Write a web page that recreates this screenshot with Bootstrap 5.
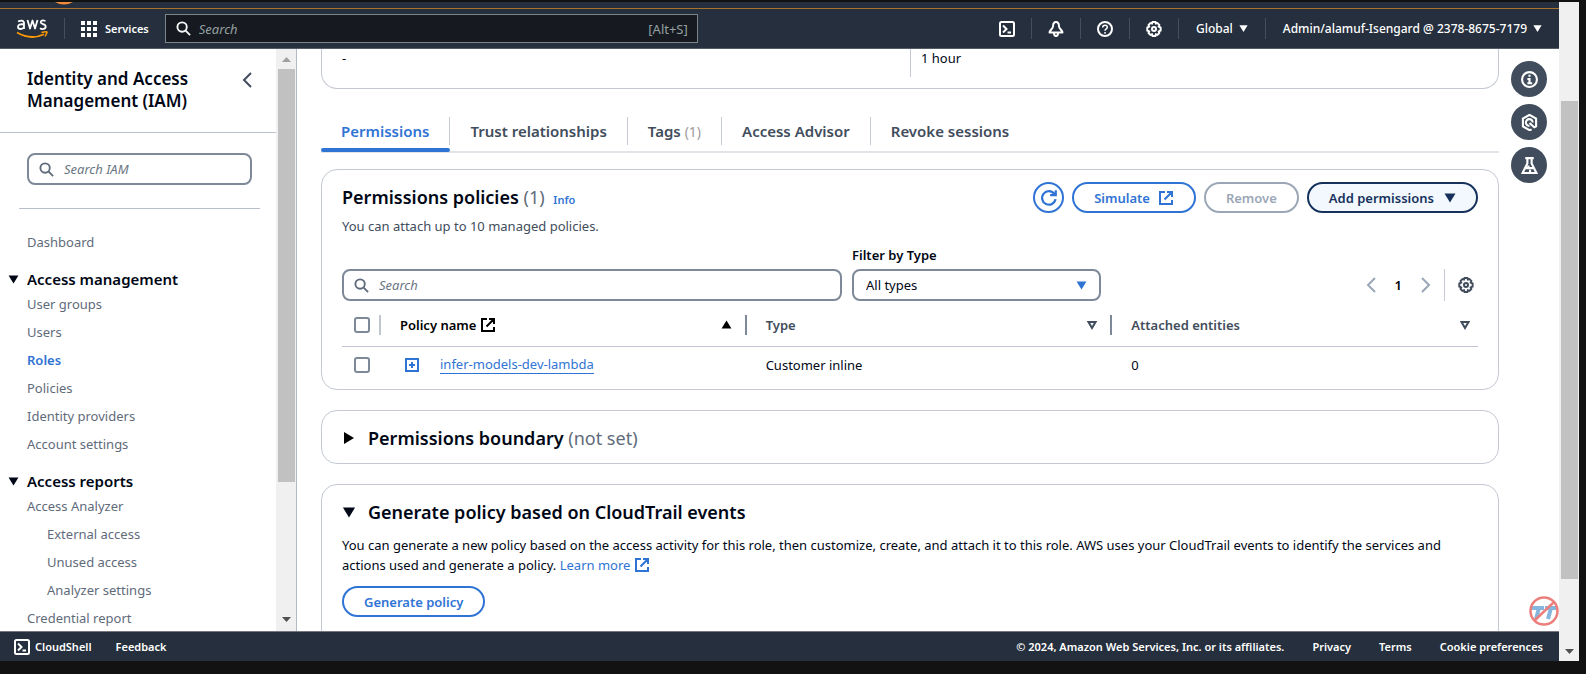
<!DOCTYPE html>
<html lang="en">
<head>
<meta charset="utf-8">
<meta name="viewport" content="width=device-width, initial-scale=1">
<title>Roles | IAM | Global</title>
<link href="https://cdn.jsdelivr.net/npm/bootstrap@5.3.0/dist/css/bootstrap.min.css" rel="stylesheet">
<style>
:root{--navy:#252f3d;--ink:#000716;--body:#414d5c;--muted:#5f6b7a;--line:#c6c6d2;--field:#7d8998;--link:#2f74d4}
body{font-family:"Noto Sans","Open Sans",sans-serif;font-size:13px;line-height:20px;color:var(--ink);background:#121212}
svg{display:block;flex:none}
a{text-decoration:none;color:inherit}
.ic{fill:none;stroke:currentColor;stroke-width:2}
.screen{height:100vh;padding:2px 7px 13px 0}
.app{min-width:0}
.strip{height:7px;background:var(--navy);border-bottom:1px solid #a8742c}
.strip svg{margin-left:55px}
.topbar{height:40px;background:var(--navy);border-bottom:1px solid #545b64;color:#fff;font-size:12px;font-weight:500}
.topbar .rule{width:1px;height:21px;background:#454f5c;flex:none}
.topbar button,.footbar button{background:none;border:0;padding:0;color:inherit;font-weight:inherit;display:flex;align-items:center}
.topbar .services{font-size:11px;font-weight:600}
.topbar .tool{width:48px;justify-content:center}
.topbar .choice{padding:0 17px;gap:6px}
.finder{width:533px;height:29px;background:#161a20;border:1px solid #7c848b;color:#95a0a0;font-weight:400;font-size:13px;padding:0 9px 0 10px}
.finder input{background:none;border:0;outline:0;padding:0;color:#fff}
input::placeholder{font-style:italic;color:#6b7683;opacity:1}
.finder input::placeholder{color:#95a0a0}
.side{width:276px}
.sidehead{padding:19px 24px 20px 27px;border-bottom:1px solid #bcc2cd}
.sidehead h2{font-size:17px;line-height:22px;font-weight:600;margin:0}
.field{height:32px;border:2px solid var(--field);border-radius:8px;background:#fff;padding:0 10px;gap:10px}
.field input{border:0;outline:0;padding:0;min-width:0;background:none}
.side .field{margin:20px 24px 0 27px}
.side hr{margin:23px 16px 18px 19px;border-color:#b9c0cb;opacity:1}
.side .links{color:var(--body);margin:0;padding:1px 0 0 27px;list-style:none}
.side .links a{display:block;line-height:28px;color:var(--muted)}
.side .links a.current{color:var(--link);font-weight:600}
.side .links .sub{padding-left:20px}
.side .group{font-size:15px;font-weight:600;line-height:20px;margin-top:8px;padding:5px 0 0 8px;gap:8px;display:flex;align-items:center;background:none;border:0;color:var(--ink)}
.track{background:#f0f0f0;width:20px;flex:none;display:flex;flex-direction:column;align-items:center}
.track .thumb{background:#c1c1c1;width:17px}
.content{min-width:0;border-left:1px solid #b4bbc6;padding:0 60px 0 24px}
.panel{border:1px solid #c4c9d3;border-radius:16px;background:#fff;padding:0 20px}
.panel.stack{margin-top:20px;padding-top:15px;padding-bottom:13px}
.panel.tall{height:300px}
.tabs{border-bottom:2px solid #e0e3e8;margin-top:25px}
.tabs .tab{background:none;border:0;padding:3px 0 0;color:var(--body);font-size:15px;font-weight:600;position:relative;height:37px;display:flex;align-items:flex-start}
.tabs .t{padding:4px 20px;height:28px;line-height:20px;border-right:1px solid #c6cad2;white-space:nowrap}
.tabs .tab:last-child .t{border:0}
.tabs .active{color:var(--link)}
.tabs .active::after{content:"";position:absolute;left:0;right:0;bottom:-1px;height:4px;background:var(--link);border-radius:2px}
.thin{font-weight:400;color:var(--muted)}
.tabs .thin{font-size:14px;color:#a09a98}
h3{font-size:18px;line-height:24px;font-weight:600;margin:0}
.pill{height:31px;border:2px solid var(--link);color:var(--link);border-radius:20px;background:#fff;font-size:13px;font-weight:600;padding:0 20px;display:flex;align-items:center;justify-content:center;gap:8px;white-space:nowrap}
.pill.round{width:31px;padding:0}
.pill.off{border-color:#9ba7b6;color:#9ba7b6}
.pill.open{border-color:#16325c;color:#16325c;background:#f2f8fd;gap:10px}
.blue{color:var(--link)}
.picker-col{flex:0 0 249px}
.picker{position:relative}
.picker select{appearance:none;width:100%;height:32px;border:2px solid var(--field);border-radius:8px;background:#fff;padding:0 12px;color:var(--ink)}
.picker svg{position:absolute;right:14px;top:12px;pointer-events:none}
.pager{height:32px;flex:0 0 367px;color:#414d5c}
.policies{table-layout:fixed;width:100%;margin:3px 0 5px}
.policies th,.policies td{padding:0;vertical-align:middle}
.policies th{height:42px;font-weight:600;color:var(--body)}
.policies thead tr{border-bottom:1px solid #c4c6d4}
.policies td{height:38px}
.policies .pick{width:39px}
.policies .cell{display:flex;align-items:center;height:20px;padding:0 13px 0 19px;border-right:2px solid #7d8998}
.policies th:last-child .cell{border:0;padding-right:8px}
.policies .pick .cell{padding:0 0 0 12px;border-color:#c0c5ce}
.policies td .cell{border:0!important}
.policies input{appearance:none;width:16px;height:16px;border:2px solid #7d8998;border-radius:3px;margin:0;background:#fff}
.inline-link{color:var(--link);border-bottom:1px solid var(--link);line-height:17px}
.floaters{position:absolute;right:12px;top:12px;display:flex;flex-direction:column;gap:7px}
.floaters button{width:36px;height:36px;border-radius:50%;border:0;background:#414d5c;color:#fff;display:flex;align-items:center;justify-content:center;padding:0}
.blocked{position:absolute;right:0;bottom:5px}
.footbar{height:30px;background:var(--navy);border-top:1px solid #74787e;color:#fff;font-size:11px;font-weight:600;padding:0 16px 0 14px}
.footbar .legal{gap:28px}
</style>
</head>
<body>
<svg width="0" height="0" class="position-absolute">
  <defs>
    <symbol id="search" viewBox="0 0 16 16"><circle cx="6.500" cy="6.500" r="5"/><path d="M10.300 10.300 15 15"/></symbol>
    <symbol id="shell" viewBox="0 0 16 16"><rect x="1" y="1" width="14" height="14" rx="1.500"/><path d="m4 4.500 3.500 3.500L4 11.500M8.500 11.500H12"/></symbol>
    <symbol id="gear" viewBox="0 0 16 16"><path d="M6.600 1h2.800l.5 1.600 1.600-.5 1.800 1.800-.6 1.600 1.900 1v3l-1.900.9.600 1.700-1.800 1.800-1.600-.6L9.400 15H6.600L6 13.300l-1.600.6-1.800-1.800.6-1.700L1.300 9.500v-3l1.900-1-.6-1.600 1.800-1.800 1.600.5z"/><circle cx="8" cy="8" r="2"/></symbol>
    <symbol id="ext" viewBox="0 0 16 16"><path d="M7 2H2v12h12V10M9 2h5v5M14 2 6.500 9.500"/></symbol>
    <symbol id="down" viewBox="0 0 12 10"><path fill="currentColor" stroke="none" d="M.5.5h11L6 9.500z"/></symbol>
    <symbol id="sort" viewBox="0 0 10 10"><path d="M1.500 2h7L5 8z"/></symbol>
  </defs>
</svg>
<div class="screen d-flex overflow-hidden">
 <div class="app flex-grow-1 d-flex flex-column bg-white">
  <div class="strip flex-shrink-0"><svg width="18" height="3" viewBox="0 0 18 3"><path fill="#f08a3c" d="M0 0h18Q9 5 0 0"/></svg></div>
  <header class="topbar d-flex align-items-center flex-shrink-0">
    <a href="#" class="ms-3" aria-label="AWS home">
      <svg width="32" height="21" viewBox="0 0 32 21"><g fill="none" stroke="#fff" stroke-width="1.800" stroke-linejoin="round"><path d="M2 3.500Q7 1.500 8 4.500v6.500M8 6.500Q2 5.500 2 8.700 2 11 4.800 11 7 11 8 9M11.500 2l2.500 8.500 2.500-8 2.500 8 2.500-8.500M29.500 3Q25 1.500 24.700 4.300c0 2.500 5 1.200 5 4.200 0 3-4 3-5.700 1.800"/></g><path fill="none" stroke="#f90" stroke-width="1.800" d="M1 14.500q14 8 27 1.700"/><path fill="none" stroke="#f90" stroke-width="1.500" d="M25.500 14.500q6-1.400 5.500 0t-2 4"/></svg>
    </a>
    <span class="rule ms-3"></span>
    <button class="services ms-3 gap-2" type="button"><svg width="16" height="16" viewBox="0 0 16 16" fill="#fff"><path d="M0 0h4v4H0zM6 0h4v4H6zM12 0h4v4h-4zM0 6h4v4H0zM6 6h4v4H6zM12 6h4v4h-4zM0 12h4v4H0zM6 12h4v4H6zM12 12h4v4h-4z"/></svg>Services</button>
    <div class="finder d-flex align-items-center ms-3">
      <svg class="ic text-light me-2" width="15" height="15"><use href="#search"/></svg>
      <input class="flex-grow-1" type="text" placeholder="Search" aria-label="Search services"><span>[Alt+S]</span>
    </div>
    <div class="d-flex align-items-center ms-auto">
      <button class="tool" type="button" aria-label="CloudShell"><svg class="ic" width="16" height="16"><use href="#shell"/></svg></button><span class="rule"></span>
      <button class="tool" type="button" aria-label="Notifications"><svg class="ic" width="16" height="16" viewBox="0 0 16 16"><path stroke-linejoin="round" d="M8 1C5.800 1 5 2.800 5 5.500c0 2-3.500 4-3.500 6h13c0-2-3.500-4-3.500-6C11 2.800 10.200 1 8 1zM6 12c0 4 4 4 4 0"/></svg></button><span class="rule"></span>
      <button class="tool" type="button" aria-label="Help"><svg class="ic" width="16" height="16" viewBox="0 0 16 16"><circle cx="8" cy="8" r="7"/><path stroke-width="1.500" d="M5.700 6.500c0-3 4.600-3 4.600-.3C10.300 8 8 7.700 8 9.800M8 11v1.700"/></svg></button><span class="rule"></span>
      <button class="tool" type="button" aria-label="Settings"><svg class="ic" width="16" height="16"><use href="#gear"/></svg></button><span class="rule"></span>
      <button class="choice" type="button">Global <svg width="9" height="9"><use href="#down"/></svg></button><span class="rule"></span>
      <button class="choice" type="button">Admin/alamuf-Isengard @ 2378-8675-7179 <svg width="9" height="9"><use href="#down"/></svg></button>
    </div>
  </header>
  <div class="flex-grow-1 d-flex overflow-hidden position-relative">
    <nav class="side flex-shrink-0 overflow-hidden" aria-label="IAM">
      <div class="sidehead d-flex justify-content-between">
        <h2>Identity and Access<br>Management (IAM)</h2>
        <a href="#" aria-label="Collapse"><svg class="ic mt-1" style="color:#414d5c" width="10" height="16" viewBox="0 0 10 16"><path d="M9 1 2 8l7 7"/></svg></a>
      </div>
      <div class="field d-flex align-items-center"><svg class="ic" style="color:#5f6b7a" width="15" height="15"><use href="#search"/></svg><input class="flex-grow-1" type="text" placeholder="Search IAM" aria-label="Search IAM"></div>
      <hr>
      <ul class="links"><li><a href="#">Dashboard</a></li></ul>
      <button class="group" type="button"><svg width="11" height="9"><use href="#down"/></svg>Access management</button>
      <ul class="links">
        <li><a href="#">User groups</a></li><li><a href="#">Users</a></li><li><a href="#" class="current">Roles</a></li><li><a href="#">Policies</a></li><li><a href="#">Identity providers</a></li><li><a href="#">Account settings</a></li>
      </ul>
      <button class="group" type="button"><svg width="11" height="9"><use href="#down"/></svg>Access reports</button>
      <ul class="links">
        <li><a href="#">Access Analyzer</a></li><li class="sub"><a href="#">External access</a></li><li class="sub"><a href="#">Unused access</a></li><li class="sub"><a href="#">Analyzer settings</a></li><li><a href="#">Credential report</a></li>
      </ul>
    </nav>
    <div class="track">
      <svg width="11" height="20" viewBox="0 0 11 20"><path fill="#a0a0a0" d="M1 13h9L5.500 8z"/></svg>
      <div class="thumb" style="height:71%"></div>
      <svg class="mt-auto" width="11" height="24" viewBox="0 0 11 24"><path fill="#505050" d="M1 10h9l-4.500 5z"/></svg>
    </div>
    <main class="content flex-grow-1 overflow-hidden">
      <section class="panel border-top-0 rounded-top-0 d-flex" style="padding-bottom:11px">
        <div class="w-50" style="line-height:18px">-</div>
        <div class="border-start" style="line-height:18px;padding:0 0 10px 10px;border-color:#c4c9d3!important">1 hour</div>
      </section>
      <div class="tabs d-flex" role="tablist">
        <button class="tab active" role="tab"><span class="t">Permissions</span></button>
        <button class="tab" role="tab"><span class="t">Trust relationships</span></button>
        <button class="tab" role="tab"><span class="t">Tags <span class="thin">(1)</span></span></button>
        <button class="tab" role="tab"><span class="t">Access Advisor</span></button>
        <button class="tab" role="tab"><span class="t">Revoke sessions</span></button>
      </div>
      <section class="panel mt-3">
        <div class="d-flex justify-content-between align-items-start" style="padding-top:12px">
          <div style="padding-top:3px">
            <h3>Permissions policies <span class="thin">(1)</span> <a href="#" class="blue ms-1" style="font-size:11px">Info</a></h3>
            <p class="m-0 pt-1" style="color:#414d5c">You can attach up to 10 managed policies.</p>
          </div>
          <div class="d-flex gap-2">
            <button class="pill round" type="button" aria-label="Refresh"><svg class="ic" width="18" height="18" viewBox="0 0 16 16"><path d="M13.800 9A6 6 0 1 1 12.800 4.500M14 1v4.500H9"/></svg></button>
            <button class="pill" type="button">Simulate <svg class="ic" width="16" height="16"><use href="#ext"/></svg></button>
            <button class="pill off" type="button" disabled>Remove</button>
            <button class="pill open" type="button">Add permissions <svg width="12" height="10"><use href="#down"/></svg></button>
          </div>
        </div>
        <div class="d-flex align-items-end" style="padding-top:9px;gap:10px">
          <div class="field d-flex align-items-center flex-grow-1"><svg class="ic" style="color:#5f6b7a" width="15" height="15"><use href="#search"/></svg><input class="flex-grow-1" type="text" placeholder="Search" aria-label="Search policies"></div>
          <div class="picker-col">
            <label for="ftype" class="d-block fw-semibold mb-1">Filter by Type</label>
            <div class="picker"><select id="ftype"><option>All types</option></select><svg class="blue" width="11" height="9"><use href="#down"/></svg></div>
          </div>
          <div class="pager d-flex align-items-center justify-content-end">
            <a href="#" aria-label="Previous page"><svg class="ic" style="color:#9ba7b6" width="10" height="16" viewBox="0 0 10 16"><path d="M9 1 2 8l7 7"/></svg></a>
            <b class="fw-semibold text-black" style="padding:0 19px">1</b>
            <a href="#" aria-label="Next page"><svg class="ic" style="color:#9ba7b6" width="10" height="16" viewBox="0 0 10 16"><path d="m1 1 7 7-7 7"/></svg></a>
            <span class="border-start align-self-stretch" style="margin:0 13px;border-color:#c4c9d3!important"></span>
            <a href="#" aria-label="Preferences" class="me-1"><svg class="ic" width="16" height="16"><use href="#gear"/></svg></a>
          </div>
        </div>
        <table class="policies">
          <thead><tr>
            <th class="pick"><div class="cell"><input type="checkbox" aria-label="Select all"></div></th>
            <th><div class="cell text-black">Policy name <svg class="ic ms-1" width="16" height="16"><use href="#ext"/></svg><svg class="ms-auto" width="11" height="9" viewBox="0 0 12 10"><path d="M.5 9.500h11L6 .5z"/></svg></div></th>
            <th><div class="cell">Type <svg class="ic ms-auto" width="10" height="10"><use href="#sort"/></svg></div></th>
            <th><div class="cell">Attached entities <svg class="ic ms-auto" width="10" height="10"><use href="#sort"/></svg></div></th>
          </tr></thead>
          <tbody><tr>
            <td class="pick"><div class="cell"><input type="checkbox" aria-label="Select policy"></div></td>
            <td><div class="cell"><svg class="ic blue ms-1" style="margin-right:20px" width="16" height="16" viewBox="0 0 16 16"><path d="M2 2h12v12H2zM8 5v6M5 8h6"/></svg><a href="#" class="inline-link">infer-models-dev-lambda</a></div></td>
            <td><div class="cell">Customer inline</div></td>
            <td><div class="cell">0</div></td>
          </tr></tbody>
        </table>
      </section>
      <section class="panel stack">
        <h3 class="d-flex align-items-center"><svg width="14" height="12" viewBox="0 0 14 12"><path d="M2 0v12l10-6z"/></svg><span style="padding-left:12px">Permissions boundary <span class="thin">(not set)</span></span></h3>
      </section>
      <section class="panel stack tall">
        <h3 class="d-flex align-items-center"><svg width="14" height="11"><use href="#down"/></svg><span style="padding-left:12px">Generate policy based on CloudTrail events</span></h3>
        <p style="margin:11px 0">You can generate a new policy based on the access activity for this role, then customize, create, and attach it to this role. AWS uses your CloudTrail events to identify the services and actions used and generate a policy. <a href="#" class="blue">Learn more <svg class="ic d-inline" width="16" height="16" style="vertical-align:-3px"><use href="#ext"/></svg></a></p>
        <button class="pill" type="button">Generate policy</button>
      </section>
    </main>
    <div class="floaters">
      <button type="button" aria-label="Info"><svg class="ic" width="17" height="17" viewBox="0 0 16 16"><circle cx="8" cy="8" r="7"/><path d="M8 3.500v2M6 7.500h2v4M6 11.500h4.500"/></svg></button>
      <button type="button" aria-label="Assistant"><svg class="ic" width="17" height="17" viewBox="0 0 16 16"><path d="M10 14.500 8 15.200 1.800 11.700V4.300L8 .8l6.200 3.500v7.400L12.500 12.500 8 8.500M11 8A3.200 3.200 0 1 0 8 11.200"/></svg></button>
      <button type="button" aria-label="Labs"><svg class="ic" width="17" height="17" viewBox="0 0 16 16"><path d="M4 1h8M6 1v5L1.500 15h13L10 6V1M4.500 10.500h7M7 8v2M8.500 12v2"/></svg></button>
    </div>
    <svg class="blocked" width="30" height="30" viewBox="0 0 30 30"><path fill="none" stroke="#86b6de" stroke-width="4" d="M3 12h12M10 12 7 23M16 12h11M22 12l-3 11"/><g fill="none" stroke="#ec7f7c" stroke-width="2.500"><circle cx="15" cy="15" r="13.500"/><path d="M25 6 5 25"/></g></svg>
  </div>
  <footer class="footbar d-flex align-items-center justify-content-between flex-shrink-0">
    <div class="d-flex gap-4"><button type="button" style="gap:5px"><svg class="ic" width="16" height="16"><use href="#shell"/></svg>CloudShell</button>
    <a href="#">Feedback</a></div>
    <div class="legal d-flex"><span>© 2024, Amazon Web Services, Inc. or its affiliates.</span>
    <a href="#">Privacy</a><a href="#">Terms</a><a href="#">Cookie preferences</a></div>
  </footer>
 </div>
 <div class="track">
   <div style="height:15%"></div>
   <div class="thumb" style="height:72.500%"></div>
   <svg class="mt-auto" width="11" height="20" viewBox="0 0 11 20"><path fill="#505050" d="M1 8h9l-4.500 5z"/></svg>
 </div>
</div>
<script src="https://cdn.jsdelivr.net/npm/bootstrap@5.3.0/dist/js/bootstrap.bundle.min.js"></script>
</body>
</html>
